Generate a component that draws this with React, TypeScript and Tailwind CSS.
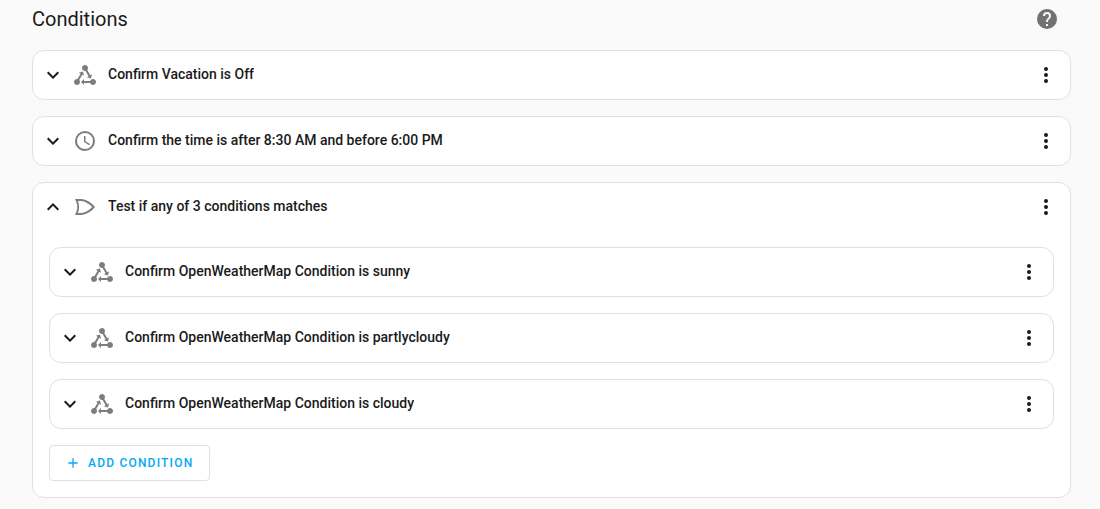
import type { ReactNode } from "react";

const paths = {
  chevronDown: "M7.41,8.58L12,13.17L16.59,8.58L18,10L12,16L6,10L7.41,8.58Z",
  chevronUp: "M7.41,15.41L12,10.83L16.59,15.41L18,14L12,8L6,14L7.41,15.41Z",
  state:
    "M6.27 17.05C6.72 17.58 7 18.25 7 19C7 20.66 5.66 22 4 22S1 20.66 1 19 2.34 16 4 16C4.18 16 4.36 16 4.53 16.05L7.6 10.69L5.86 9.7L9.95 8.58L11.07 12.67L9.33 11.68L6.27 17.05M20 16C18.7 16 17.6 16.84 17.18 18H11V16L8 19L11 22V20H17.18C17.6 21.16 18.7 22 20 22C21.66 22 23 20.66 23 19S21.66 16 20 16M12 8C12.18 8 12.36 8 12.53 7.95L15.6 13.31L13.86 14.3L17.95 15.42L19.07 11.33L17.33 12.32L14.27 6.95C14.72 6.42 15 5.75 15 5C15 3.34 13.66 2 12 2S9 3.34 9 5 10.34 8 12 8Z",
  clock:
    "M12,20A8,8 0 0,0 20,12A8,8 0 0,0 12,4A8,8 0 0,0 4,12A8,8 0 0,0 12,20M12,2A10,10 0 0,1 22,12A10,10 0 0,1 12,22C6.47,22 2,17.5 2,12A10,10 0 0,1 12,2M12.5,7V12.25L17,14.92L16.25,16.15L11,13V7H12.5Z",
  or: "M2,4C5,10 5,14 2,20H8C13,20 19,16 22,12C19,8 13,4 8,4H2M5,6H8C11.5,6 16.3,9 19.3,12C16.3,15 11.5,18 8,18H5C6.4,14 6.4,10 5,6Z",
  dots: "M12,16A2,2 0 0,1 14,18A2,2 0 0,1 12,20A2,2 0 0,1 10,18A2,2 0 0,1 12,16M12,10A2,2 0 0,1 14,12A2,2 0 0,1 12,14A2,2 0 0,1 10,12A2,2 0 0,1 12,10M12,4A2,2 0 0,1 14,6A2,2 0 0,1 12,8A2,2 0 0,1 10,6A2,2 0 0,1 12,4Z",
  help: "M15.07,11.25L14.17,12.17C13.45,12.89 13,13.5 13,15H11V14.5C11,13.39 11.45,12.39 12.17,11.67L13.41,10.41C13.78,10.05 14,9.55 14,9C14,7.89 13.1,7 12,7A2,2 0 0,0 10,9H8A4,4 0 0,1 12,5A4,4 0 0,1 16,9C16,9.88 15.64,10.67 15.07,11.25M13,19H11V17H13M12,2A10,10 0 0,0 2,12A10,10 0 0,0 12,22A10,10 0 0,0 22,12C22,6.47 17.5,2 12,2Z",
  plus: "M19,13H13V19H11V13H5V11H11V5H13V11H19V13Z",
};

type IconName = keyof typeof paths;

function Icon({ name, className = "size-6" }: { name: IconName; className?: string }) {
  return (
    <svg viewBox="0 0 24 24" fill="currentColor" aria-hidden="true" className={`shrink-0 ${className}`}>
      <path d={paths[name]} />
    </svg>
  );
}

function ConditionCard({ icon, title, children }: { icon: IconName; title: string; children?: ReactNode }) {
  const open = Boolean(children);
  return (
    <section className="rounded-xl border border-[#e0e0e0] bg-white">
      <div className="flex h-12 items-center pr-3 pl-2">
        <button type="button" aria-expanded={open} className="flex min-w-0 flex-1 items-center text-left">
          <Icon name={open ? "chevronUp" : "chevronDown"} />
          <Icon name={icon} className="ml-2 size-6 text-[#7d7d7d]" />
          <span className="ml-[11px] truncate pb-0.5 text-[14px] leading-5 font-medium">{title}</span>
        </button>
        <button type="button" aria-label="Condition menu" className="shrink-0">
          <Icon name="dots" />
        </button>
      </div>
      {children && <div className="flex flex-col gap-4 p-4">{children}</div>}
    </section>
  );
}

export default function App() {
  return (
    <main className="min-h-screen bg-[#fafafa] pr-[29px] pb-3 pl-8 font-[Roboto,sans-serif] text-[#1a1a1a]">
      <header className="flex items-center justify-between pt-[7px] pr-3 pb-[19px]">
        <h2 className="text-[20px] leading-6">Conditions</h2>
        <a href="#help" aria-label="Learn more about conditions" className="text-[#727272]">
          <Icon name="help" />
        </a>
      </header>
      <div className="flex flex-col gap-4">
        <ConditionCard icon="state" title="Confirm Vacation is Off" />
        <ConditionCard icon="clock" title="Confirm the time is after 8:30 AM and before 6:00 PM" />
        <ConditionCard icon="or" title="Test if any of 3 conditions matches">
          <ConditionCard icon="state" title="Confirm OpenWeatherMap Condition is sunny" />
          <ConditionCard icon="state" title="Confirm OpenWeatherMap Condition is partlycloudy" />
          <ConditionCard icon="state" title="Confirm OpenWeatherMap Condition is cloudy" />
          <button
            type="button"
            className="flex h-9 items-center gap-[7px] self-start rounded border border-[#e0e0e0] pr-4 pl-[15px] text-[12px] leading-4 font-medium tracking-widest text-[#03a9f4] uppercase"
          >
            <Icon name="plus" className="size-4" />
            Add condition
          </button>
        </ConditionCard>
      </div>
    </main>
  );
}
